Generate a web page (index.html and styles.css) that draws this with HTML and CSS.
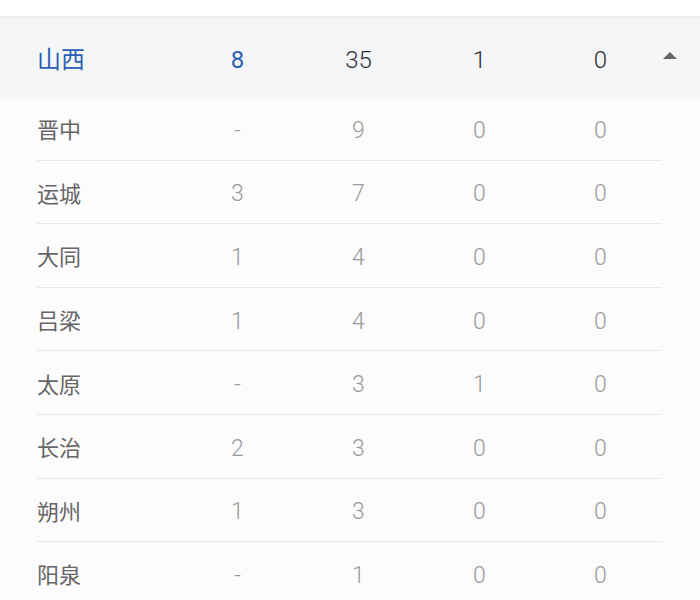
FILE: index.html
```html
<!DOCTYPE html>
<html lang="zh">
<head>
<meta charset="utf-8">
<link rel="stylesheet" href="styles.css">
</head>
<body>
<div class="top"></div>
<div class="table">
  <div class="row head">
    <div class="cell name">山西</div>
    <div class="cell num blue">8</div>
    <div class="cell num">35</div>
    <div class="cell num">1</div>
    <div class="cell num">0</div>
    <div class="cell arrow"><span class="tri"></span></div>
  </div>
  <div class="children">
    <div class="row child"><div class="cell name">晋中</div><div class="cell num">-</div><div class="cell num">9</div><div class="cell num">0</div><div class="cell num">0</div></div>
    <div class="row child"><div class="cell name">运城</div><div class="cell num">3</div><div class="cell num">7</div><div class="cell num">0</div><div class="cell num">0</div></div>
    <div class="row child"><div class="cell name">大同</div><div class="cell num">1</div><div class="cell num">4</div><div class="cell num">0</div><div class="cell num">0</div></div>
    <div class="row child"><div class="cell name">吕梁</div><div class="cell num">1</div><div class="cell num">4</div><div class="cell num">0</div><div class="cell num">0</div></div>
    <div class="row child"><div class="cell name">太原</div><div class="cell num">-</div><div class="cell num">3</div><div class="cell num">1</div><div class="cell num">0</div></div>
    <div class="row child"><div class="cell name">长治</div><div class="cell num">2</div><div class="cell num">3</div><div class="cell num">0</div><div class="cell num">0</div></div>
    <div class="row child"><div class="cell name">朔州</div><div class="cell num">1</div><div class="cell num">3</div><div class="cell num">0</div><div class="cell num">0</div></div>
    <div class="row child"><div class="cell name">阳泉</div><div class="cell num">-</div><div class="cell num">1</div><div class="cell num">0</div><div class="cell num">0</div></div>
  </div>
</div>
</body>
</html>
```
FILE: styles.css
```css
html, body {
  margin: 0;
  padding: 0;
  background: #fcfcfd;
  font-family: "Roboto", "Noto Sans CJK SC", sans-serif;
  overflow: hidden;
}
.top {
  height: 16px;
  background: #ffffff;
  border-bottom: 2px solid #eeeeef;
}
.row {
  display: flex;
  align-items: center;
}
.cell {
  font-size: 23px;
}
.name {
  width: 140px;
  font-family: "Noto Sans CJK SC", sans-serif;
  font-weight: 400;
}
.num {
  width: 121px;
  text-align: center;
  font-weight: 300;
  padding-top: 4px;
}
.head {
  height: 79px;
  background: #f5f6f8;
  padding-left: 37px;
  color: #2e2e2e;
}
.head .name {
  color: #2b5fb4;
  font-size: 24px;
}
.head .num {
  font-size: 24px;
  font-weight: 300;
}
.head .blue {
  color: #2b5fb4;
  font-weight: 400;
}
.arrow {
  flex: 1;
  display: flex;
  justify-content: flex-start;
  padding-left: 2px;
}
.tri {
  width: 0;
  height: 0;
  border-left: 7px solid transparent;
  border-right: 7px solid transparent;
  border-bottom: 7px solid #666666;
  margin-top: -4px;
}
.children {
  padding-left: 37px;
}
.child {
  width: 625px;
  height: 62.6px;
  border-bottom: 1px solid #e8e8ea;
  color: #9a9a9a;
}
.child .name {
  color: #666666;
  font-size: 22px;
}
.child .num {
  font-size: 23px;
}
```
